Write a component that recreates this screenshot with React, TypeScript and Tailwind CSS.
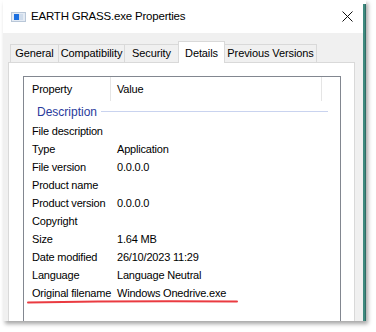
import React from "react";

const rows: [string, string][] = [
  ["File description", ""],
  ["Type", "Application"],
  ["File version", "0.0.0.0"],
  ["Product name", ""],
  ["Product version", "0.0.0.0"],
  ["Copyright", ""],
  ["Size", "1.64 MB"],
  ["Date modified", "26/10/2023 11:29"],
  ["Language", "Language Neutral"],
  ["Original filename", "Windows Onedrive.exe"],
];

const tabs = [
  { label: "General", w: "w-[49px]" },
  { label: "Compatibility", w: "w-[67px]" },
  { label: "Security", w: "w-[55px]" },
  { label: "Details", w: "w-[47px]", active: true },
  { label: "Previous Versions", w: "w-[93px]" },
];

function WindowIcon() {
  return (
    <svg width="15" height="10" viewBox="0 0 15 10">
      <rect x="0.5" y="0.5" width="14" height="9" fill="#e4ebf4" stroke="#b9c7d8" />
      <rect x="3" y="2" width="5" height="6" fill="#1b6fe0" />
      <rect x="8" y="2" width="4" height="6" fill="#cfdcec" />
    </svg>
  );
}

export default function App() {
  return (
    <div
      className="relative w-[376px] h-[332px] bg-white overflow-hidden text-black"
      style={{ fontFamily: '"Liberation Sans", Arial, sans-serif' }}
    >
      <div className="flex ml-[3px] w-[363px] h-[321px] shadow-[2px_3px_4px_rgba(0,0,0,0.35)]">
        <div className="flex flex-col w-[360px]">
          {/* title bar */}
          <div className="flex items-center h-[33px] bg-white pl-[8px] pr-[10px]">
            <WindowIcon />
            <span className="ml-[5px] text-[11.5px] tracking-[-0.2px] pt-[1px]">EARTH GRASS.exe Properties</span>
            <svg className="ml-auto" width="11" height="11" viewBox="0 0 11 11">
              <path d="M0.5 0.5 L10.5 10.5 M10.5 0.5 L0.5 10.5" stroke="#111" strokeWidth="1" />
            </svg>
          </div>

          {/* body */}
          <div className="flex flex-col flex-1 bg-[#f0f0f0] pl-[5px] pr-[8px] pt-[8px]">
            <div className="flex items-end pl-[2px] text-[11px] tracking-[-0.1px]">
              {tabs.map((t, i) =>
                t.active ? (
                  <div
                    key={t.label}
                    className={`relative z-10 -ml-px -mb-px h-[22px] ${t.w} flex justify-center pt-[3px] bg-white border border-b-0 border-[#d9d9d9]`}
                  >
                    {t.label}
                  </div>
                ) : (
                  <div
                    key={t.label}
                    className={`${i > 0 ? "-ml-px" : ""} h-[18px] ${t.w} flex items-center justify-center bg-[#f0f0f0] border border-b-0 border-[#d9d9d9]`}
                  >
                    {t.label}
                  </div>
                )
              )}
            </div>

            {/* tab pane */}
            <div className="flex flex-col flex-1 bg-white border border-b-0 border-[#d9d9d9] pl-[14px] pt-[13px] pr-[13px]">
              <div className="flex flex-col flex-1 border border-b-0 border-[#828790] text-[11px] tracking-[-0.2px]">
                <div className="flex h-[24px]">
                  <div className="w-[87px] flex items-center pl-[8px] border-r border-[#e5e5e5]">Property</div>
                  <div className="w-[211px] flex items-center pl-[6px] border-r border-[#e5e5e5]">Value</div>
                </div>
                <div className="flex items-center h-[21px] pl-[13px] pr-[12px]">
                  <span className="text-[12px] tracking-normal text-[#2a3b9c]">Description</span>
                  <div className="flex-1 ml-[4px] h-px bg-[#c9d3ef]" />
                </div>
                {rows.map(([k, v]) => (
                  <div key={k} className="flex items-center h-[18px]">
                    <div className="w-[87px] pl-[8px] whitespace-nowrap">{k}</div>
                    <div className="pl-[6px] whitespace-nowrap">{v}</div>
                  </div>
                ))}
              </div>
            </div>
          </div>
        </div>
        <div className="w-[3px] mt-[4px] bg-[#3f8a7f] border-r border-[#2f6e66]" />
      </div>

      {/* red annotation underline */}
      <svg className="absolute left-0 top-0 pointer-events-none" width="376" height="332">
        <path d="M28 302.5 Q130 300.8 237 301.6" stroke="#e8262c" strokeWidth="2" fill="none" strokeLinecap="round" opacity="0.9" />
      </svg>
    </div>
  );
}
